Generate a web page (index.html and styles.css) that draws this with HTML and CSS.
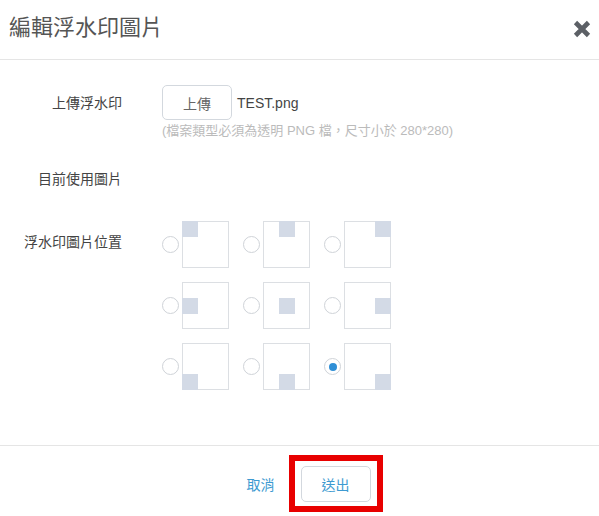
FILE: index.html
```html
<!DOCTYPE html>
<html lang="zh-Hant">
<head>
    <meta charset="UTF-8">
    <meta name="viewport" content="width=device-width, initial-scale=1.0">
    <title>編輯浮水印圖片</title>
    <link rel="stylesheet" href="styles.css">
</head>
<body>
    <div class="modal">
        <div class="modal-header">
            <h2 class="modal-title">編輯浮水印圖片</h2>
            <button class="close" type="button">
                <svg width="20" height="20" viewBox="0 0 20 20">
                    <path d="M3.5 3.5 L16.5 16.5 M16.5 3.5 L3.5 16.5" stroke="#5c6066" stroke-width="4.6" stroke-linecap="butt" fill="none"/>
                </svg>
            </button>
        </div>

        <div class="modal-body">
            <div class="row row-upload">
                <div class="row-label">上傳浮水印</div>
                <div class="row-field">
                    <div class="upload-line">
                        <button class="btn" type="button">上傳</button>
                        <span class="file-name">TEST.png</span>
                    </div>
                    <p class="hint">(檔案類型必須為透明 PNG 檔，尺寸小於 280*280)</p>
                </div>
            </div>

            <div class="row row-current">
                <div class="row-label">目前使用圖片</div>
                <div class="row-field"></div>
            </div>

            <div class="row row-position">
                <div class="row-label">浮水印圖片位置</div>
                <div class="row-field">
                    <div class="pos-grid">
                        <label class="pos"><input type="radio" name="pos"><span class="box top left"><i></i></span></label>
                        <label class="pos"><input type="radio" name="pos"><span class="box top center"><i></i></span></label>
                        <label class="pos"><input type="radio" name="pos"><span class="box top right"><i></i></span></label>
                        <label class="pos"><input type="radio" name="pos"><span class="box middle left"><i></i></span></label>
                        <label class="pos"><input type="radio" name="pos"><span class="box middle center"><i></i></span></label>
                        <label class="pos"><input type="radio" name="pos"><span class="box middle right"><i></i></span></label>
                        <label class="pos"><input type="radio" name="pos"><span class="box bottom left"><i></i></span></label>
                        <label class="pos"><input type="radio" name="pos"><span class="box bottom center"><i></i></span></label>
                        <label class="pos"><input type="radio" name="pos" checked><span class="box bottom right"><i></i></span></label>
                    </div>
                </div>
            </div>
        </div>

        <div class="modal-footer">
            <a class="cancel" href="#">取消</a>
            <span class="highlight">
                <button class="btn btn-submit" type="button">送出</button>
            </span>
        </div>
    </div>
</body>
</html>
```

FILE: styles.css
```css
body{
    margin: 0;
    background-color: #ffffff;
    font-family: "Liberation Sans", "Noto Sans CJK TC", sans-serif;
    color: #555555;
}
.modal{
    width: 599px;
}
.modal-header{
    height: 59px;
    border-bottom: 1px solid #e5e5e5;
    display: flex;
    align-items: center;
    justify-content: space-between;
    padding: 0 6px 0 9px;
}
.modal-title{
    margin: 0 0 4px 0;
    font-size: 22px;
    font-weight: normal;
    line-height: 30px;
    color: #555555;
}
.close{
    border: none;
    background: none;
    padding: 0;
    width: 22px;
    height: 22px;
    display: flex;
    align-items: center;
    justify-content: center;
    margin-bottom: 2px;
}
.modal-body{
    padding: 25px 0 55px 0;
}
.row{
    display: grid;
    grid-template-columns: 122px 1fr;
    column-gap: 40px;
}
.row-label{
    text-align: right;
    font-size: 14px;
    line-height: 20px;
    color: #444444;
}
.row-upload .row-label{
    padding-top: 8px;
}
.upload-line{
    display: flex;
    align-items: center;
}
.btn{
    font-family: "Liberation Sans", "Noto Sans CJK TC", sans-serif;
    font-size: 14px;
    background-color: #ffffff;
    border: 1px solid #d3d8de;
    border-radius: 5px;
    width: 70px;
    height: 35px;
    padding: 0;
    color: #666666;
}
.file-name{
    font-size: 14px;
    margin-left: 5px;
    color: #444444;
}
.hint{
    margin: 2px 0 0 0;
    font-size: 13px;
    line-height: 18px;
    color: #bbbbbb;
}
.row-current{
    margin-top: 29px;
}
.row-position{
    margin-top: 32px;
}
.row-position .row-label{
    padding-top: 11px;
}
.pos-grid{
    display: grid;
    grid-template-columns: repeat(3, 67px);
    column-gap: 14px;
    row-gap: 14px;
}
.pos{
    display: flex;
    align-items: center;
}
.pos input{
    appearance: none;
    -webkit-appearance: none;
    margin: 0 3px 0 0;
    width: 17px;
    height: 17px;
    border: 1px solid #cfd3d8;
    border-radius: 50%;
    background-color: #ffffff;
    display: flex;
    align-items: center;
    justify-content: center;
}
.pos input:checked::after{
    content: "";
    width: 8px;
    height: 8px;
    border-radius: 50%;
    background-color: #2f8fd6;
}
.box{
    width: 47px;
    height: 47px;
    box-shadow: inset 0 0 0 1px #dcdfe3;
    display: flex;
}
.box i{
    width: 16px;
    height: 16px;
    background-color: #d3dae6;
}
.top{ align-items: flex-start; }
.middle{ align-items: center; }
.bottom{ align-items: flex-end; }
.left{ justify-content: flex-start; }
.center{ justify-content: center; }
.right{ justify-content: flex-end; }
.modal-footer{
    border-top: 1px solid #e5e5e5;
    padding: 9px 0 0 30px;
    display: flex;
    justify-content: center;
    align-items: center;
}
.cancel{
    font-size: 14px;
    color: #3d9ad1;
    text-decoration: none;
    margin-right: 14px;
}
.highlight{
    display: inline-flex;
    border: 6px solid #e80000;
    padding: 5px 6px 4px 6px;
}
.btn-submit{
    color: #3d9ad1;
    height: 36px;
}
```
